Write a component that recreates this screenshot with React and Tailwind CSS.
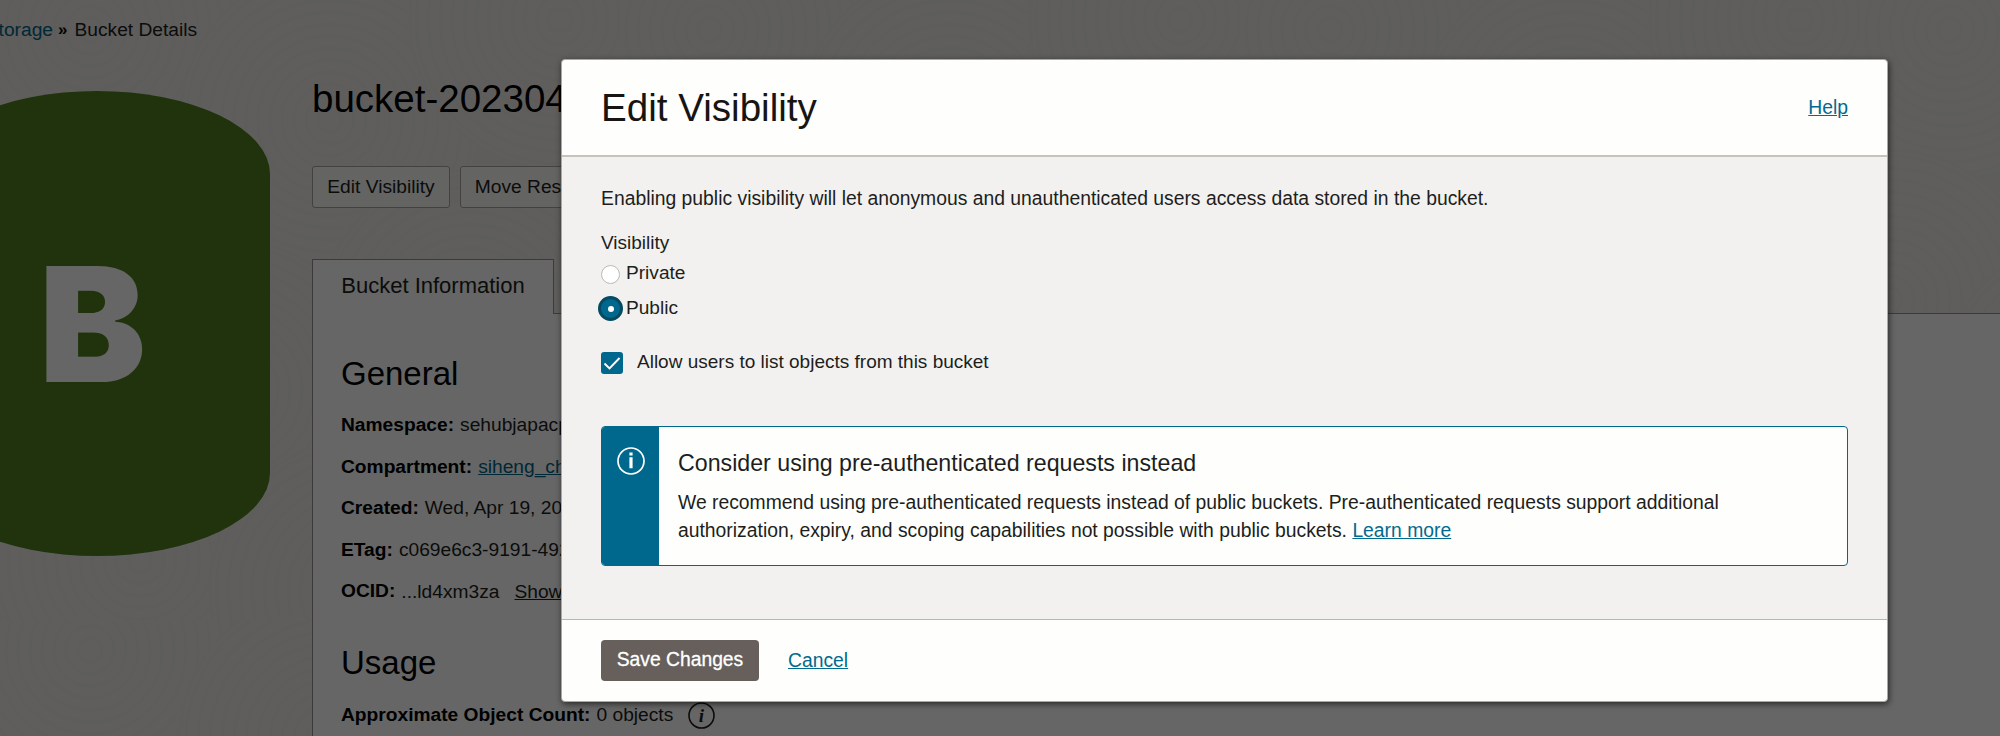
import React from 'react';

const RING_CENTERS = [
  [90, 30], [330, 120], [560, 20], [30, 300], [230, 390], [470, 320], [590, 500], [140, 560], [360, 590],
];

function Texture() {
  return (
    <svg className="absolute inset-0 h-full w-full" aria-hidden="true">
      <defs>
        <pattern id="rings" width="620" height="620" patternUnits="userSpaceOnUse">
          {RING_CENTERS.map(([cx, cy]) => (
            <g key={`${cx}-${cy}`} fill="none" stroke="#e8e8e6" strokeWidth="3">
              <circle cx={cx} cy={cy} r="150" fill="#eeebe8" />
              {[12, 24, 36, 48, 60, 72, 84, 96, 108, 120, 132, 144].map((r) => (
                <circle key={r} cx={cx} cy={cy} r={r} />
              ))}
            </g>
          ))}
        </pattern>
      </defs>
      <rect width="100%" height="100%" fill="url(#rings)" />
    </svg>
  );
}

function Field({ label, children }) {
  return (
    <div className="flex h-[41.5px] items-center gap-[6px] whitespace-nowrap">
      <span className="font-bold text-black">{label}</span>
      {children}
    </div>
  );
}

function BucketPage() {
  return (
    <div className="relative isolate h-full w-full overflow-hidden bg-[#ebe9e6] text-[19.2px] text-[#201e1c]">
      <Texture />
      <div className="relative flex h-full flex-col">
        <nav className="flex h-[60px] items-center gap-[5px] whitespace-nowrap text-[19.2px]">
          <span className="flex w-[53px] justify-end text-[#006485]">Storage</span>
          <span className="text-[17px] font-bold text-black">»</span>
          <span className="pl-[2px]">Bucket Details</span>
        </nav>
        <div className="flex flex-1">
          <div className="w-[312px] shrink-0 pt-[31px]">
            <div className="-ml-[76px] flex h-[465px] w-[346px] items-center rounded-[173px/83px] bg-[#50801f] pl-[115px]">
              <span className="font-[Inter,sans-serif] text-[160px] leading-none font-black text-white">B</span>
            </div>
          </div>
          <div className="flex min-w-0 flex-1 flex-col">
            <h1 className="h-[106px] pt-[17px] text-[38.5px] leading-[44px] whitespace-nowrap text-black">bucket-20230419-1530</h1>
            <div className="flex h-[93px] items-start gap-[10px] whitespace-nowrap">
              <button className="h-[42px] w-[138px] rounded-[3px] border border-[#a8a5a2] bg-[#fbf9f8]">Edit Visibility</button>
              <button className="h-[42px] w-[164px] rounded-[3px] border border-[#a8a5a2] bg-[#fbf9f8]">Move Resource</button>
            </div>
            <div className="relative z-10 -mb-px flex h-[55px]">
              <div className="flex w-[242px] justify-center border border-b-0 border-[#99948f] bg-white pt-[13px] text-[22px] leading-[26px] whitespace-nowrap">Bucket Information</div>
              <div className="flex-1 border-b border-[#99948f]" />
            </div>
            <div className="flex-1 border-l border-[#99948f] bg-white pl-[28px]">
              <h2 className="h-[92px] pt-[42px] text-[33px] leading-[38px] text-black">General</h2>
              <div className="pb-[31px]">
                <Field label="Namespace:">sehubjapacprod</Field>
                <Field label="Compartment:"><span className="text-[#006485] underline">siheng_chen</span></Field>
                <Field label="Created:">Wed, Apr 19, 2023</Field>
                <Field label="ETag:">c069e6c3-9191-4920</Field>
                <Field label="OCID:"><span className="pt-px">...ld4xm3za</span><span className="pt-px pl-[9px] underline">Show</span></Field>
              </div>
              <h2 className="h-[51px] text-[33px] leading-[38px] text-black">Usage</h2>
              <Field label="Approximate Object Count:">
                <span>0 objects</span>
                <svg className="ml-[9px] h-[27px] w-[27px]" viewBox="0 0 27 27">
                  <circle cx="13.5" cy="13.5" r="12.5" fill="none" stroke="currentColor" strokeWidth="1.6" />
                  <text x="13.5" y="20" textAnchor="middle" className="fill-current font-['Liberation_Serif',serif] text-[19px] font-bold italic">i</text>
                </svg>
              </Field>
            </div>
          </div>
        </div>
      </div>
    </div>
  );
}

function VisibilityDialog() {
  return (
    <div className="absolute top-[59px] left-[561px] z-20 flex h-[643px] w-[1327px] flex-col overflow-hidden rounded-[4px] border border-[#aba7a3] bg-[#fefefc] text-[19.34px] text-[#201e1c] shadow-[1px_2px_6px_rgba(0,0,0,0.6)]">
      <header className="flex h-[97px] items-center justify-between border-b-2 border-[#c6c3bf] px-[39px]">
        <h1 className="text-[38.6px] text-[#161513]">Edit Visibility</h1>
        <a className="text-[#006b8f] underline">Help</a>
      </header>
      <main className="flex-1 bg-[#f3f1f0] px-[39px] pt-[29px] leading-[24px]">
        <p className="whitespace-nowrap">Enabling public visibility will let anonymous and unauthenticated users access data stored in the bucket.</p>
        <p className="pt-[20.5px] text-[19px]">Visibility</p>
        <div className="mt-[6.5px] flex h-[26px] items-center gap-[6px] text-[19.1px]">
          <span className="h-[19px] w-[19px] rounded-full border border-[#bdb8b3] bg-white" />
          <span className="-mt-[2px]">Private</span>
        </div>
        <div className="mt-[8.5px] flex h-[26px] items-center gap-[3px] text-[19.1px]">
          <span className="-ml-[3px] flex h-[25px] w-[25px] items-center justify-center rounded-full border-[3px] border-[#044a63] bg-[#00688c]">
            <span className="h-[6px] w-[6px] rounded-full bg-white" />
          </span>
          <span className="-mt-[2px]">Public</span>
        </div>
        <div className="mt-[28px] flex h-[26px] items-center gap-[14px]">
          <span className="flex h-[22px] w-[22px] items-center justify-center rounded-[3px] bg-[#00688c]">
            <svg className="h-[22px] w-[22px]" viewBox="0 0 22 22" fill="none" stroke="white" strokeWidth="1.9">
              <path d="M3.5 11.5 8.5 16.5 18.5 6" />
            </svg>
          </span>
          <span className="-mt-[2px] text-[19px]">Allow users to list objects from this bucket</span>
        </div>
        <section className="mt-[50.5px] flex h-[140px] overflow-hidden rounded-[4px] border-[1.5px] border-[#00688c] bg-[#fefefc]">
          <div className="flex w-[57px] shrink-0 justify-center bg-[#00688c] pt-[20px]">
            <svg className="h-[28px] w-[28px]" viewBox="0 0 28 28">
              <circle cx="14" cy="14" r="13" fill="none" stroke="white" strokeWidth="1.7" />
              <path d="M12.4 5.6h3.2v3h-3.2zM12.4 10.2h3.2v11h-3.2z" fill="white" />
            </svg>
          </div>
          <div className="pt-[22px] pl-[19px] whitespace-nowrap">
            <h2 className="text-[23.2px] leading-[28px]">Consider using pre-authenticated requests instead</h2>
            <p className="pt-[12px] leading-[27.5px]">
              We recommend using pre-authenticated requests instead of public buckets. Pre-authenticated requests support additional<br />
              authorization, expiry, and scoping capabilities not possible with public buckets. <a className="text-[#006b8f] underline">Learn more</a>
            </p>
          </div>
        </section>
      </main>
      <footer className="flex h-[82px] items-center gap-[29px] border-t-[1.5px] border-[#b9b5b2] px-[39px]">
        <button className="h-[41px] w-[158px] rounded-[4px] bg-[#665f5b] text-[19.3px] whitespace-nowrap text-white [-webkit-text-stroke:0.3px_white]">Save Changes</button>
        <a className="text-[#006b8f] underline">Cancel</a>
      </footer>
    </div>
  );
}

export default function App() {
  return (
    <div className="relative h-[736px] w-[2000px] overflow-hidden font-['Liberation_Sans',Arial,sans-serif]">
      <BucketPage />
      <div className="absolute inset-0 z-10 bg-black/60" />
      <VisibilityDialog />
    </div>
  );
}
